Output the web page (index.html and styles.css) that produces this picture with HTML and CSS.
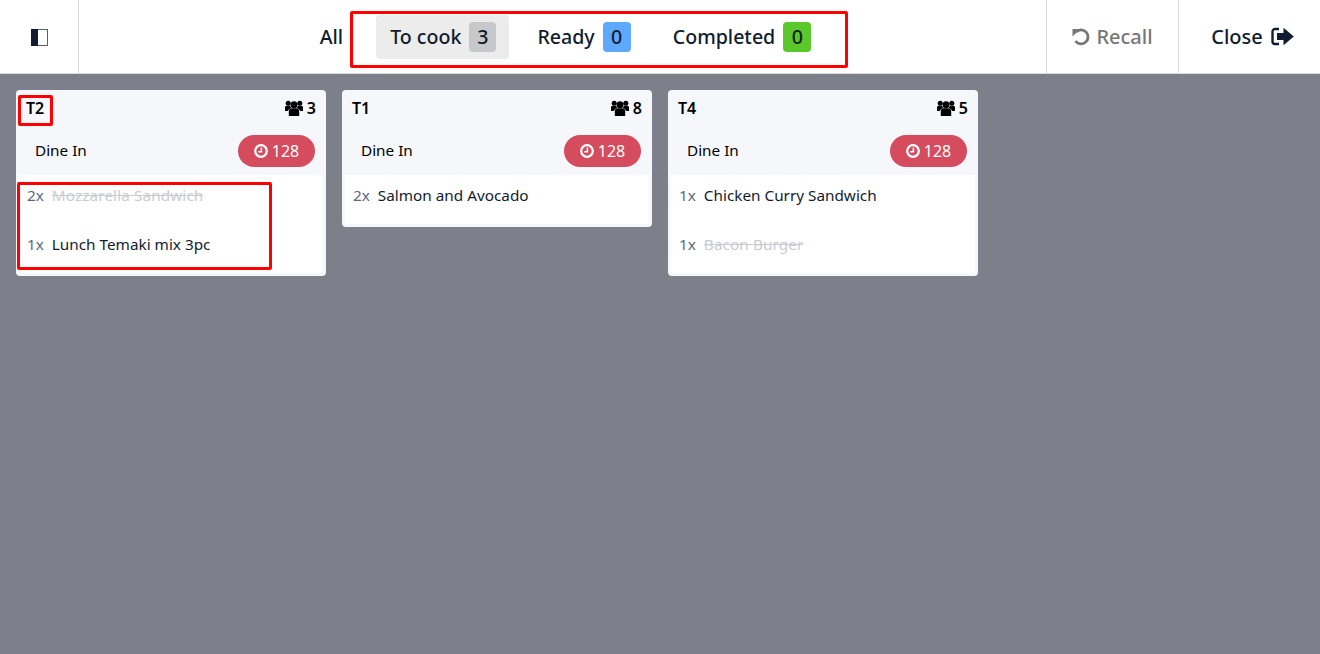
FILE: index.html
```html
<!DOCTYPE html>
<html lang="en">
<head>
<meta charset="utf-8">
<title>Kitchen Display</title>
<link rel="stylesheet" href="styles.css">
</head>
<body>
<header class="navbar">
  <button class="nav-btn toggle" aria-label="Toggle sidebar">
    <svg width="17" height="17" viewBox="0 0 17 17"><rect x="0.5" y="0.5" width="16" height="16" fill="#fff" stroke="#56606e" stroke-width="1"/><rect x="0" y="0" width="7" height="17" fill="#111c2e"/></svg>
  </button>
  <nav class="tabs">
    <span class="tab tab-all">All</span>
    <span class="tab tab-active">To cook <b class="badge badge-grey">3</b></span>
    <span class="tab">Ready <b class="badge badge-blue">0</b></span>
    <span class="tab">Completed <b class="badge badge-green">0</b></span>
  </nav>
  <button class="nav-btn recall">
    <svg width="18" height="18" viewBox="0 0 18 18"><path d="M4 4 A7 7 0 1 1 3.4 13" fill="none" stroke="#777" stroke-width="2.8"/><path d="M0.5 1 L8 1 L0.5 8.5 Z" fill="#777"/></svg>
    Recall
  </button>
  <button class="nav-btn close">
    Close
    <svg width="23" height="19" viewBox="0 0 23 19"><path d="M8 2 H4 A2.5 2.5 0 0 0 1.5 4.5 V14.5 A2.5 2.5 0 0 0 4 17 H8" fill="none" stroke="#111c2e" stroke-width="2.4"/><path d="M6 6 H12.5 V0.8 L22.8 9.5 L12.5 18.2 V13 H6 Z" fill="#111c2e"/></svg>
  </button>
</header>

<main class="board">
  <article class="card">
    <div class="card-head"><span class="table">T2</span><span class="guests"><svg class="people" viewBox="0 0 18 16"><use href="#people"/></svg>3</span></div>
    <div class="card-sub"><span class="order-type">Dine In</span><span class="timer"><svg class="clock" viewBox="0 0 14 14"><use href="#clock"/></svg>128</span></div>
    <ul class="items">
      <li><span class="qty">2x</span><span class="done">Mozzarella Sandwich</span></li>
      <li><span class="qty">1x</span><span>Lunch Temaki mix 3pc</span></li>
    </ul>
  </article>
  <article class="card">
    <div class="card-head"><span class="table">T1</span><span class="guests"><svg class="people" viewBox="0 0 18 16"><use href="#people"/></svg>8</span></div>
    <div class="card-sub"><span class="order-type">Dine In</span><span class="timer"><svg class="clock" viewBox="0 0 14 14"><use href="#clock"/></svg>128</span></div>
    <ul class="items">
      <li><span class="qty">2x</span><span>Salmon and Avocado</span></li>
    </ul>
  </article>
  <article class="card">
    <div class="card-head"><span class="table">T4</span><span class="guests"><svg class="people" viewBox="0 0 18 16"><use href="#people"/></svg>5</span></div>
    <div class="card-sub"><span class="order-type">Dine In</span><span class="timer"><svg class="clock" viewBox="0 0 14 14"><use href="#clock"/></svg>128</span></div>
    <ul class="items">
      <li><span class="qty">1x</span><span>Chicken Curry Sandwich</span></li>
      <li><span class="qty">1x</span><span class="done">Bacon Burger</span></li>
    </ul>
  </article>
</main>

<div class="mark mark-tabs"></div>
<div class="mark mark-table"></div>
<div class="mark mark-items"></div>

<svg class="defs" width="0" height="0" aria-hidden="true">
  <symbol id="people" viewBox="0 0 18 16">
    <circle cx="9" cy="4.8" r="3.5"/><circle cx="3.2" cy="3.2" r="2.5"/><circle cx="14.8" cy="3.2" r="2.5"/>
    <path d="M3.8 16 V11.5 A3.4 3.4 0 0 1 7.2 8.2 H10.8 A3.4 3.4 0 0 1 14.2 11.5 V16 Z"/>
    <path d="M0 11 V8 A2 2 0 0 1 2 5.8 H5 A5 5 0 0 0 6.4 8 A5 5 0 0 0 2.8 11 Z"/><path d="M18 11 V8 A2 2 0 0 0 16 5.8 H13 A5 5 0 0 1 11.6 8 A5 5 0 0 1 15.2 11 Z"/>
  </symbol>
  <symbol id="clock" viewBox="0 0 14 14">
    <circle cx="7" cy="7" r="5.8" fill="none" stroke="#fff" stroke-width="2.2"/><path d="M7.4 3.6 V7.8 H4.2" fill="none" stroke="#fff" stroke-width="1.5"/>
  </symbol>
</svg>
</body>
</html>
```

FILE: styles.css
```css
* { box-sizing: border-box; }
html, body { height: 100%; }
body {
  margin: 0;
  background: #7d808a;
  color: #111c2e;
  font-family: "Noto Sans", "Open Sans", sans-serif;
  font-size: 15px;
  overflow: hidden;
}
.navbar {
  display: flex;
  align-items: stretch;
  height: 74px;
  background: #fff;
  border-bottom: 1px solid #d9dadc;
}
.nav-btn {
  display: flex;
  align-items: center;
  justify-content: center;
  gap: 7px;
  border: 0;
  background: none;
  font: inherit;
  font-size: 20px;
  font-weight: 500;
  color: #111c2e;
  padding: 0;
}
.toggle { width: 79px; padding-top: 2px; border-right: 1px solid #d9dadc; }
.recall { width: 132px; border-left: 1px solid #d9dadc; color: #777; gap: 6px; }
.close { width: 142px; border-left: 1px solid #d9dadc; gap: 8px; padding-left: 6px; }
.tabs {
  flex: 1;
  display: flex;
  align-items: center;
  justify-content: center;
  gap: 16px;
  padding-left: 19px;
  font-size: 19.6px;
  font-weight: 500;
}
.tab {
  display: flex;
  align-items: center;
  gap: 8px;
  height: 44px;
  padding: 0 13px;
  border-radius: 4px;
  white-space: nowrap;
}
.tab-all { padding: 0; margin-right: 17px; }
.tab-active { background: #ececec; padding-left: 14px; margin-right: -1px; }
.badge {
  display: flex;
  align-items: center;
  justify-content: center;
  width: 28px;
  height: 30px;
  border-radius: 4px;
  font-weight: 500;
  font-size: 19.6px;
}
.badge-grey { background: #c7c8ca; width: 27px; }
.badge-blue { background: #5fa8ff; }
.badge-green { background: #5ac72a; }
.board {
  display: flex;
  align-items: flex-start;
  gap: 16px;
  padding: 16px;
}
.card {
  width: 310px;
  background: #f6f7fb;
  border-radius: 4px;
  padding: 0 3px 3px;
}
.card-head {
  display: flex;
  align-items: center;
  justify-content: space-between;
  height: 37px;
  padding: 0 7px 2px;
  font-size: 16px;
  font-weight: 600;
  color: #000;
}
.guests { display: flex; align-items: center; gap: 4px; }
.people { width: 18px; height: 16px; fill: #000; }
.card-sub {
  display: flex;
  align-items: center;
  justify-content: space-between;
  height: 48px;
  padding: 0 8px 0 16px;
  font-size: 15.3px;
  color: #000;
}
.order-type { margin-bottom: 2px; }
.timer {
  display: flex;
  align-items: center;
  justify-content: center;
  gap: 4px;
  width: 77px;
  height: 32px;
  border-radius: 16px;
  background: #d44c5e;
  color: #fff;
  font-size: 16px;
}
.clock { width: 14px; height: 14px; }
.items {
  list-style: none;
  margin: 0;
  padding: 0;
  background: #fff;
  font-size: 15.3px;
}
.items li {
  display: flex;
  gap: 8px;
  align-items: center;
  height: 49px;
  padding: 0 8px 9px;
  white-space: nowrap;
}
.qty { color: #5c677d; }
.done { color: #c9ccd1; text-decoration: line-through; letter-spacing: 0.1px; }
.mark {
  position: absolute;
  border: 3px solid #fe0000;
  border-radius: 2px;
  pointer-events: none;
}
.mark-tabs { left: 350px; top: 11px; width: 498px; height: 57px; }
.mark-table { left: 18px; top: 95px; width: 35px; height: 31px; }
.mark-items { left: 17px; top: 182px; width: 255px; height: 88px; }
.defs { position: absolute; }
```
